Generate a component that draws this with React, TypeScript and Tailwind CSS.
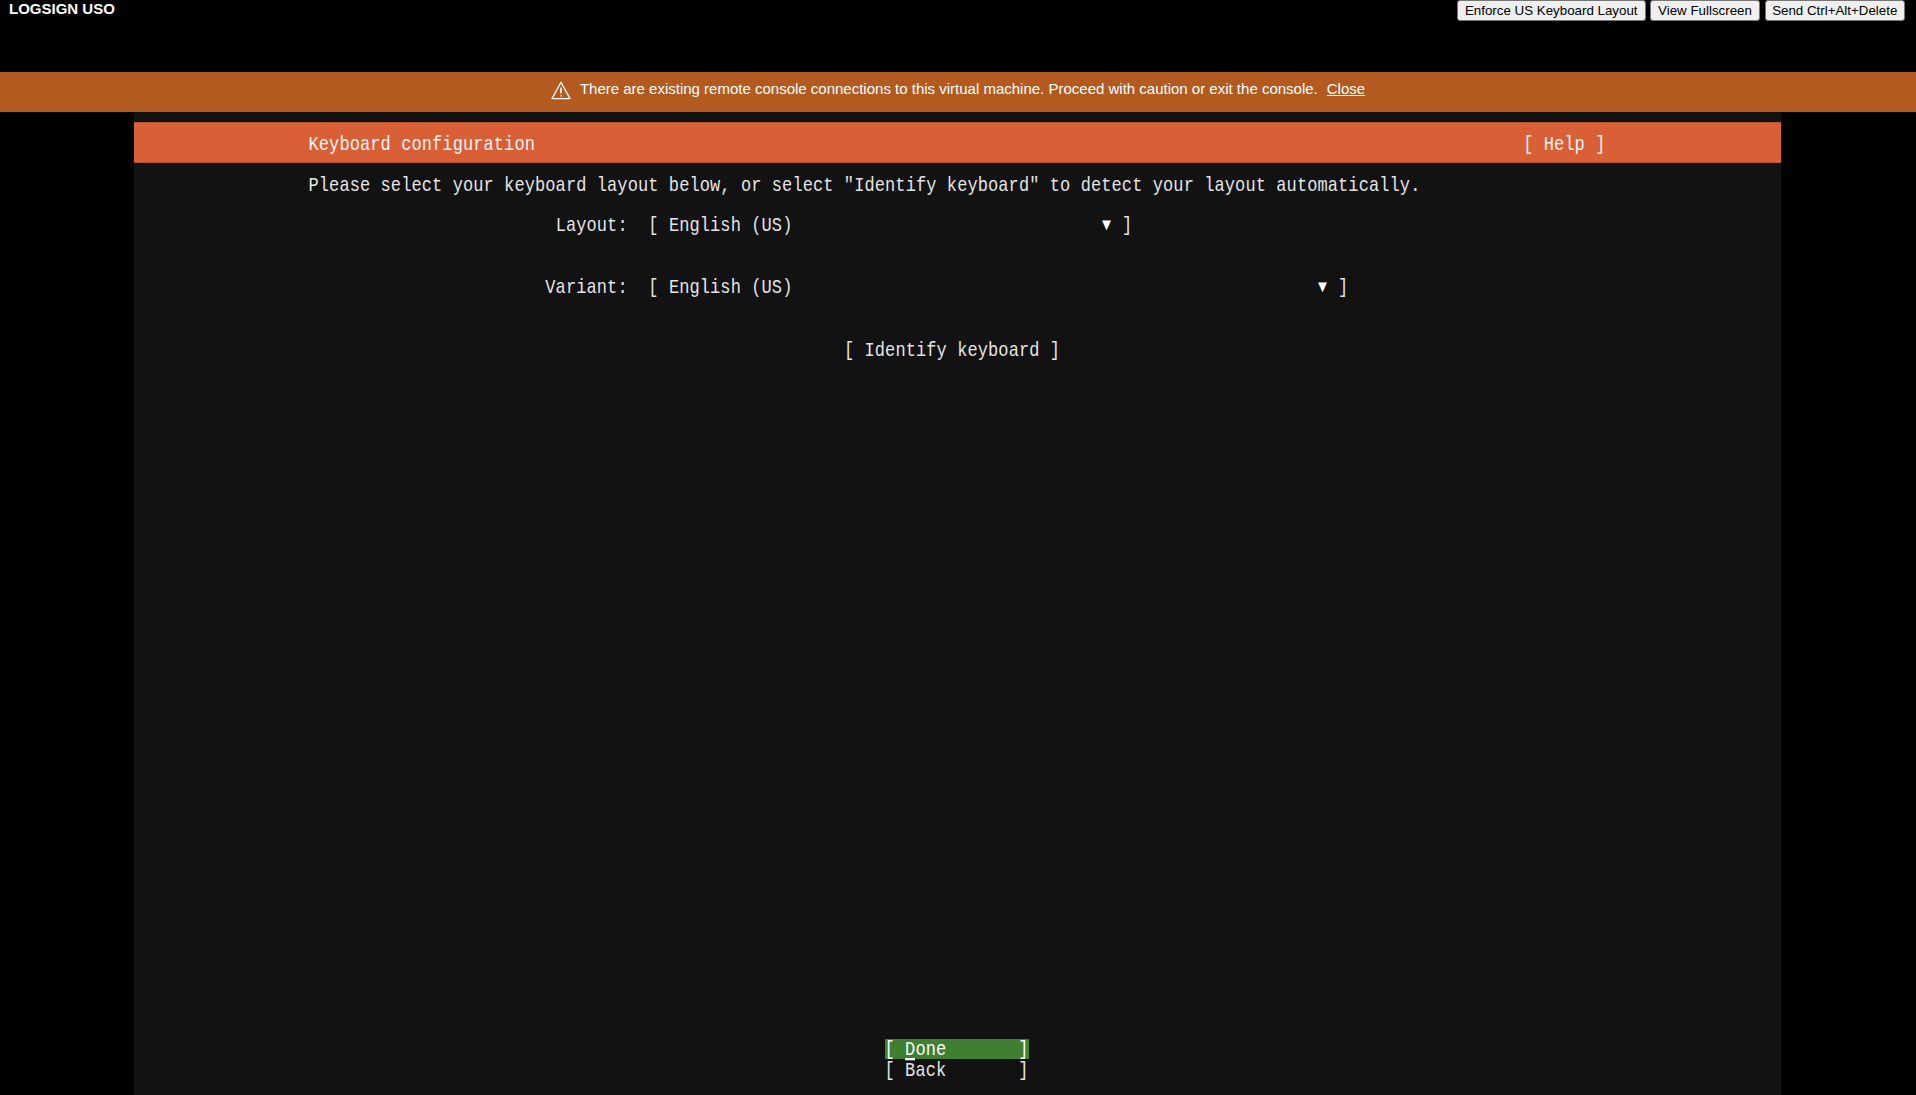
import React from 'react';

// terminal font is taller and narrower than Liberation Mono, so stretch the text a bit
const Cells: React.FC<{ children: React.ReactNode }> = ({ children }) => (
  <span className="inline-block relative top-[1px] scale-y-[1.15]">{children}</span>
);

// one terminal row: text is laid out on the 160 column console grid
const Row: React.FC<{ children: React.ReactNode; className?: string }> = ({ children, className = '' }) => (
  <div className={`h-[20.7px] leading-[20.7px] whitespace-pre ${className}`}>
    <Cells>{children}</Cells>
  </div>
);

const Arrow = () => <span className="text-[15px] relative top-[-1px] inline-block w-[10.294px] text-center text-white">▼</span>;

const WarningIcon = () => (
  <svg width="20" height="19" viewBox="0 0 20 19" fill="none" stroke="white" strokeWidth="1.3" strokeLinejoin="round" className="relative top-[-2px]">
    <path d="M10 1.2 L19 17.6 H1 Z" />
    <path d="M10 6.5 V12.4" strokeWidth="1.5" />
    <path d="M10 14 V15.4" strokeWidth="1.5" />
  </svg>
);

const TopButton: React.FC<{ label: string; width: string }> = ({ label, width }) => (
  <button className={`h-[21px] ${width} bg-[#efefef] border border-[#767676] rounded-[3px] text-[13.33px] text-black font-['Liberation_Sans',sans-serif] whitespace-nowrap`}>
    {label}
  </button>
);

export default function App() {
  return (
    <div className="h-screen flex flex-col overflow-hidden bg-black font-['Liberation_Sans',sans-serif]">
      {/* top bar */}
      <div className="h-[72px] shrink-0 flex justify-between items-start pl-[9px] pr-[11px]">
        <div className="text-[15px] leading-[17px] font-bold text-white">LOGSIGN USO</div>
        <div className="flex gap-[4.5px]">
          <TopButton label="Enforce US Keyboard Layout" width="w-[188.5px]" />
          <TopButton label="View Fullscreen" width="w-[110px]" />
          <TopButton label="Send Ctrl+Alt+Delete" width="w-[140.5px]" />
        </div>
      </div>

      {/* warning banner */}
      <div className="h-[40px] shrink-0 bg-[#b35a20] flex items-center justify-center gap-[9px] text-white text-[15px]">
        <WarningIcon />
        <span className="relative top-[-3px]">There are existing remote console connections to this virtual machine. Proceed with caution or exit the console.</span>
        <a className="underline relative top-[-3px] cursor-pointer">Close</a>
      </div>

      {/* console */}
      <div className="flex-1 ml-[133.5px] w-[1647px] bg-[#121212] flex flex-col pt-[10px] pb-[15px] text-[#e4e4e4] text-[17px] tracking-[0.094px] font-['Liberation_Mono',monospace]">
        <div className="h-[41.4px] shrink-0 bg-[#d95f36] border-y border-[#b9512e] flex items-center justify-between px-[175px] pt-[3px] text-[#f4f4f4]">
          <Cells>Keyboard configuration</Cells>
          <Cells>[ Help ]</Cells>
        </div>
        <div className="mt-[12px] pl-[175px]">
          <Row>Please select your keyboard layout below, or select "Identify keyboard" to detect your layout automatically.</Row>
        </div>
        <div className="mt-[20.2px]">
          <Row>{' '.repeat(41)}Layout:  [ English (US){' '.repeat(30)}<Arrow /> ]</Row>
          <Row> </Row>
          <Row> </Row>
          <Row>{' '.repeat(40)}Variant:  [ English (US){' '.repeat(51)}<Arrow /> ]</Row>
          <Row> </Row>
          <Row> </Row>
          <Row>{' '.repeat(69)}[ Identify keyboard ]</Row>
        </div>
        <div className="mt-auto pl-[751px]">
          <Row className="w-[144px] bg-[#3e7f32] text-white">
            [ <span className="relative">D<span className="absolute left-0 right-0 bottom-[0px] h-[2.5px] bg-white" /></span>one{' '.repeat(7)}]
          </Row>
          <Row className="pt-[1px]">[ Back{' '.repeat(7)}]</Row>
        </div>
      </div>
    </div>
  );
}
